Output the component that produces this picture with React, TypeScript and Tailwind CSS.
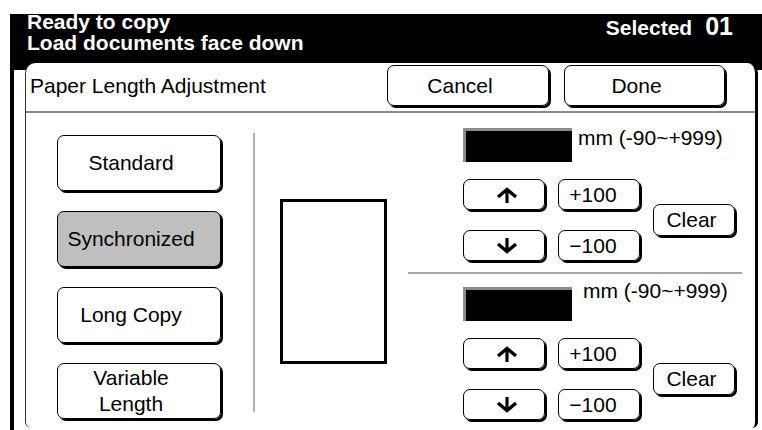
import React from "react";

type BtnProps = {
  children: React.ReactNode;
  className?: string;
};

const Btn: React.FC<BtnProps> = ({ children, className = "" }) => (
  <button
    className={`flex shrink-0 items-center justify-center rounded-[7px] border border-black text-[21px] leading-[24px] text-black shadow-[2px_2px_0_#000] ${className}`}
  >
    {children}
  </button>
);

const ArrowUp = () => (
  <svg width="22" height="16" viewBox="0 0 22 16" className="shrink-0">
    <path d="M2 10 L11 2.5 L20 10" fill="none" stroke="#000" strokeWidth="3.4" />
    <path d="M11 3 V16" stroke="#000" strokeWidth="3.2" />
  </svg>
);

const ArrowDown = () => (
  <svg width="22" height="16" viewBox="0 0 22 16" className="shrink-0">
    <path d="M2 6 L11 13.5 L20 6" fill="none" stroke="#000" strokeWidth="3.4" />
    <path d="M11 0 V13" stroke="#000" strokeWidth="3.2" />
  </svg>
);

const Field = () => (
  <div className="h-[34px] w-[109px] shrink-0 border-l-[3px] border-t-[3px] border-l-[#8c8c8c] border-t-[#8c8c8c] bg-black" />
);

const Stepper = () => (
  <div className="flex items-center">
    <div className="grid grid-cols-[82px_82px] gap-x-[13px] gap-y-[20px]">
      <Btn className="h-[31px] pl-[5px]">
        <ArrowUp />
      </Btn>
      <Btn className="h-[31px] pr-[12px]">+100</Btn>
      <Btn className="h-[31px] pl-[5px]">
        <ArrowDown />
      </Btn>
      <Btn className="h-[31px] pr-[12px]">−100</Btn>
    </div>
    <Btn className="ml-[13px] h-[32px] w-[82px] pr-[5px]">Clear</Btn>
  </div>
);

export default function App() {
  return (
    <div className="h-[430px] w-[762px] overflow-hidden bg-white pl-[10px] pt-[14px] font-['Liberation_Sans',Arial,sans-serif] text-black">
      <div className="flex h-full flex-col border-l-4 border-black">
        {/* status bar */}
        <header className="flex h-[49px] shrink-0 items-start justify-between bg-black pl-[13px] pr-[29px] text-white">
          <div className="-mt-[3px] text-[21px] font-bold leading-[21px]">
            <div>Ready to copy</div>
            <div>Load documents face down</div>
          </div>
          <div className="flex items-baseline gap-[13px] font-bold">
            <span className="text-[21px] leading-[19px]">Selected</span>
            <span className="text-[25px] leading-[25px]">01</span>
          </div>
        </header>

        <div className="flex min-h-0 flex-1 bg-[linear-gradient(to_bottom,#000_7px,#fff_7px)] pl-[11px]">
          <div className="mb-[2px] mr-[4px] flex flex-1 flex-col rounded-t-[10px] rounded-b-[6px] border-l border-r-[3px] border-l-[#333] border-r-black bg-white">
            {/* title row */}
            <div className="flex h-[48px] shrink-0 items-start">
              <span className="mt-[11px] pl-[4px] text-[21px] leading-[24px]">
                Paper Length Adjustment
              </span>
              <Btn className="ml-auto mt-[2px] h-[41px] w-[162px] pr-[16px]">Cancel</Btn>
              <Btn className="ml-[15px] mr-[30px] mt-[2px] h-[41px] w-[161px] pr-[16px]">Done</Btn>
            </div>
            <div className="h-[2px] shrink-0 bg-[#8c8c8c]" />

            <div className="flex min-h-0 flex-1">
              {/* modes */}
              <div className="flex w-[227px] shrink-0 flex-col gap-[20px] pl-[31px] pt-[22px]">
                <Btn className="h-[56px] w-[164px] pr-[16px]">Standard</Btn>
                <Btn className="h-[56px] w-[164px] bg-[#bfbfbf] pr-[16px]">Synchronized</Btn>
                <Btn className="h-[56px] w-[164px] pr-[16px]">Long Copy</Btn>
                <Btn className="h-[56px] w-[164px] flex-col pr-[16px] leading-[26px]">
                  <span>Variable</span>
                  <span>Length</span>
                </Btn>
              </div>
              <div className="mt-[20px] h-[279px] w-[2px] shrink-0 bg-[#b0b0b0]" />

              {/* paper preview */}
              <div className="w-[153px] shrink-0">
                <div className="ml-[25px] mt-[86px] h-[165px] w-[107px] border-[3px] border-black" />
              </div>

              {/* adjusters */}
              <div className="flex w-[334px] shrink-0 flex-col">
                <div className="pl-[55px] pt-[15px]">
                  <div className="flex items-start">
                    <Field />
                    <span className="-mt-[2px] ml-[6px] text-[21px] leading-[24px]">mm (-90~+999)</span>
                  </div>
                  <div className="mt-[17px]">
                    <Stepper />
                  </div>
                </div>
                <div className="mt-[11px] h-[2px] bg-[#a6a6a6]" />
                <div className="pl-[55px] pt-[13px]">
                  <div className="flex items-start">
                    <Field />
                    <span className="-mt-[8px] ml-[11px] text-[21px] leading-[24px]">mm (-90~+999)</span>
                  </div>
                  <div className="mt-[17px]">
                    <Stepper />
                  </div>
                </div>
              </div>
            </div>
          </div>
        </div>
      </div>
    </div>
  );
}
